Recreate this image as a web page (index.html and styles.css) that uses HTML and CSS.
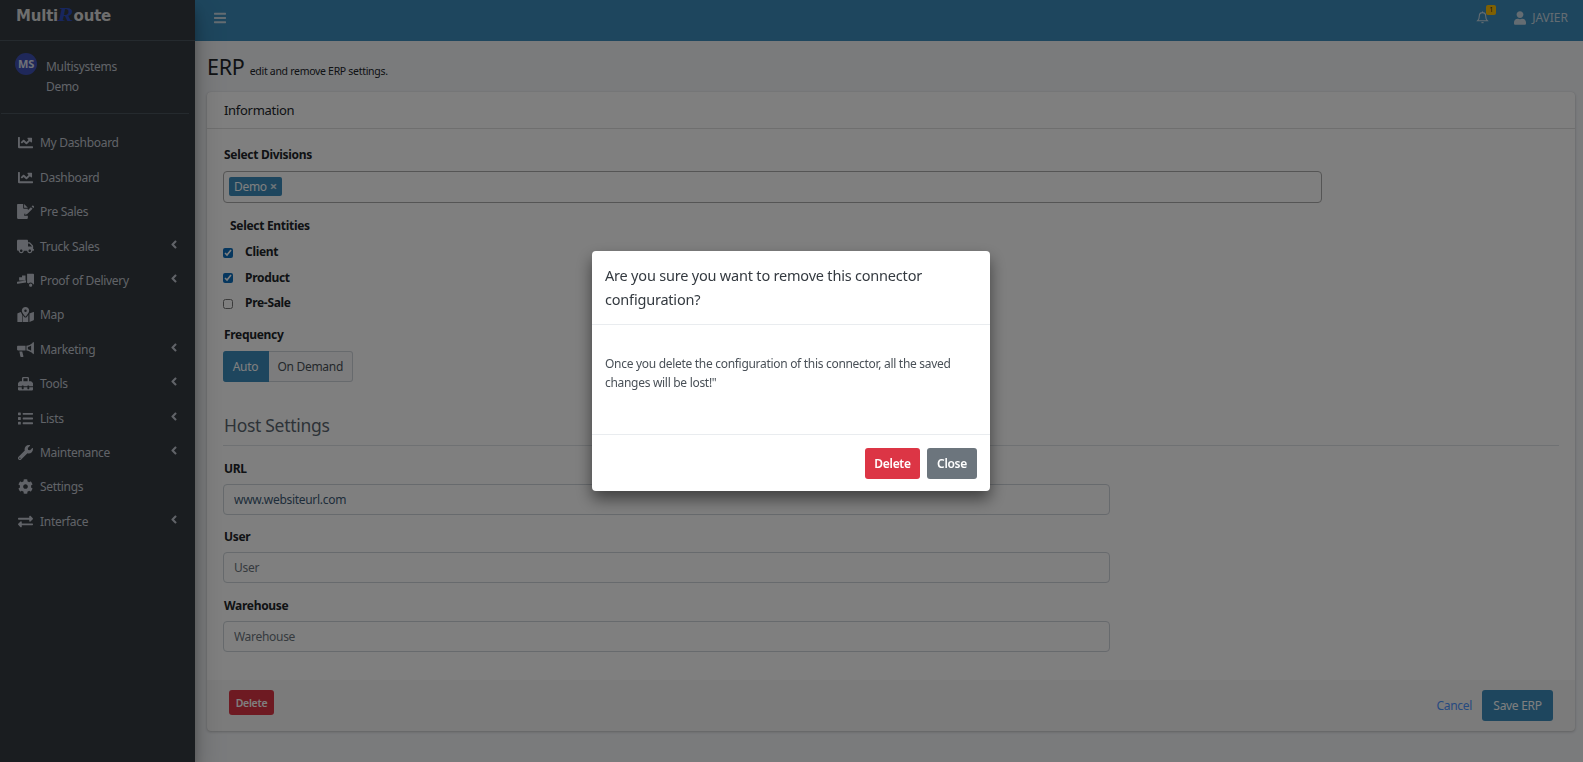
FILE: index.html
```html
<!DOCTYPE html>
<html>
    <head>
        <meta charset="utf-8">
        <title>ERP</title>
        <link rel="stylesheet" href="styles.css">
    </head>
    <body>
        <svg class="sprites" xmlns="http://www.w3.org/2000/svg">
            <symbol id="i-chart" viewBox="0 0 512 512"><path d="M496 384H64V80c0-8.84-7.16-16-16-16H16C7.16 64 0 71.16 0 80v336c0 17.67 14.33 32 32 32h464c8.84 0 16-7.16 16-16v-32c0-8.84-7.16-16-16-16zM464 96H345.94c-21.38 0-32.09 25.85-16.97 40.97l32.4 32.4L288 242.75l-73.37-73.37c-12.5-12.5-32.76-12.5-45.25 0l-68.69 68.69c-6.25 6.25-6.25 16.38 0 22.63l22.62 22.62c6.25 6.25 16.38 6.25 22.63 0L192 237.25l73.37 73.37c12.5 12.5 32.76 12.5 45.25 0l96-96 32.4 32.4c15.12 15.12 40.97 4.41 40.97-16.97V112c.01-8.84-7.15-16-15.99-16z"/></symbol>
            <symbol id="i-sign" viewBox="0 0 576 512"><path d="M0 32C0 14 14 0 32 0h176v136c0 13 11 24 24 24h136v60L250 338l-8 62h126v80c0 18-14 32-32 32H32c-18 0-32-14-32-32zM240 0l128 128H240zM70 420l50-90 40 50 40-30 20 60v20H70zM555 60l21 21c10 10 10 26 0 36l-22 22-57-57 22-22c10-10 26-10 36 0zM472 107l57 57-190 190-70 13 13-70z"/></symbol>
            <symbol id="i-truck" viewBox="0 0 640 512"><path d="M624 352h-16V243.9c0-12.7-5.1-24.9-14.1-33.9L494 110.1c-9-9-21.2-14.1-33.9-14.1H416V48c0-26.5-21.5-48-48-48H48C21.5 0 0 21.5 0 48v320c0 26.5 21.5 48 48 48h16c0 53 43 96 96 96s96-43 96-96h128c0 53 43 96 96 96s96-43 96-96h48c8.8 0 16-7.2 16-16v-32c0-8.8-7.2-16-16-16zM160 464c-26.5 0-48-21.5-48-48s21.5-48 48-48 48 21.5 48 48-21.5 48-48 48zm320 0c-26.5 0-48-21.5-48-48s21.5-48 48-48 48 21.5 48 48-21.5 48-48 48zm80-208H416V144h44.1l99.9 99.9V256z"/></symbol>
            <symbol id="i-loading" viewBox="0 0 640 512"><path d="M80 130h110v130H80zM190 70h130v190H190zM10 300l330-40v70L26 380c-14 2-24-6-26-20s-2-58 10-60zM380 0h230c16 0 30 14 30 30v370h-40c-8-40-44-70-86-70-30 0-58 15-74 40l-60-30zM514 372c33 0 60 27 60 60s-27 60-60 60-60-27-60-60 27-60 60-60z"/></symbol>
            <symbol id="i-map" viewBox="0 0 576 512"><path d="M288 0c-69 0-126 56-126 126 0 56 82 158 113 196 7 8 19 8 26 0 31-38 113-140 113-196C414 56 357 0 288 0zm0 168a42 42 0 1 1 0-84 42 42 0 0 1 0 84zM20 216l110-44c8 28 26 60 42 88v252L11 576V240c0-10 4-20 9-24zM288 360c-16 0-32-7-42-20-18-22-38-48-54-74v246l192 0V266c-16 26-36 52-54 74-10 13-26 20-42 20zM556 172l-132 52v288l141-64c7-3 11-10 11-18V186c0-11-11-18-20-14z"/></symbol>
            <symbol id="i-horn" viewBox="0 0 576 512"><path fill-rule="evenodd" d="M528 32c0-18 14-32 24-32s24 14 24 32v352c0 18-14 32-24 32s-24-14-24-32C470 330 390 298 320 288v-160c70-10 150-42 208-96zM480 120c-40 30-80 42-112 50v76c32 8 72 20 112 50zM32 128h256v160H32c-18 0-32-14-32-32v-96c0-18 14-32 32-32zM80 320h96l42 166c4 14-6 26-20 26h-64c-10 0-18-6-21-16z"/></symbol>
            <symbol id="i-toolbox" viewBox="0 0 512 512"><path d="M502 230l-45-45c-6-6-14-9-23-9h-58V80c0-26-22-48-48-48H184c-26 0-48 22-48 48v96H78c-9 0-17 3-23 9l-45 45c-6 6-10 14-10 23v99h128v-16c0-9 7-16 16-16h32c9 0 16 7 16 16v16h128v-16c0-9 7-16 16-16h32c9 0 16 7 16 16v16h128v-99c0-9-4-17-10-23zM328 176H184V80h144zM384 432c0 9-7 16-16 16h-32c-9 0-16-7-16-16v-48H192v48c0 9-7 16-16 16h-32c-9 0-16-7-16-16v-48H0v80c0 18 14 32 32 32h448c18 0 32-14 32-32v-80H384z"/></symbol>
            <symbol id="i-list" viewBox="0 0 512 512"><path d="M80 368H16a16 16 0 0 0-16 16v64a16 16 0 0 0 16 16h64a16 16 0 0 0 16-16v-64a16 16 0 0 0-16-16zm0-320H16A16 16 0 0 0 0 64v64a16 16 0 0 0 16 16h64a16 16 0 0 0 16-16V64a16 16 0 0 0-16-16zm0 160H16a16 16 0 0 0-16 16v64a16 16 0 0 0 16 16h64a16 16 0 0 0 16-16v-64a16 16 0 0 0-16-16zm416 176H176a16 16 0 0 0-16 16v32a16 16 0 0 0 16 16h320a16 16 0 0 0 16-16v-32a16 16 0 0 0-16-16zm0-320H176a16 16 0 0 0-16 16v32a16 16 0 0 0 16 16h320a16 16 0 0 0 16-16V80a16 16 0 0 0-16-16zm0 160H176a16 16 0 0 0-16 16v32a16 16 0 0 0 16 16h320a16 16 0 0 0 16-16v-32a16 16 0 0 0-16-16z"/></symbol>
            <symbol id="i-wrench" viewBox="0 0 512 512"><path d="M507.73 109.1c-2.24-9.03-13.54-12.09-20.12-5.51l-74.36 74.36-67.88-11.31-11.31-67.88 74.36-74.36c6.62-6.62 3.43-17.9-5.66-20.16-47.38-11.74-99.55.91-136.58 37.93-39.64 39.64-50.55 97.1-34.05 147.2L18.74 402.76c-24.99 24.99-24.99 65.51 0 90.5 24.99 24.99 65.51 24.99 90.5 0l213.21-213.21c50.12 16.71 107.47 5.68 147.37-34.22 37.07-37.07 49.7-89.32 37.91-136.73zM64 472c-13.25 0-24-10.75-24-24 0-13.26 10.75-24 24-24s24 10.74 24 24c0 13.25-10.75 24-24 24z"/></symbol>
            <symbol id="i-cog" viewBox="0 0 512 512"><path d="M487.4 315.7l-42.6-24.6c4.3-23.2 4.3-47 0-70.2l42.6-24.6c4.9-2.8 7.1-8.6 5.5-14-11.1-35.6-30-67.8-54.7-94.6-3.8-4.1-10-5.1-14.8-2.3L380.8 110c-17.9-15.4-38.5-27.3-60.8-35.1V25.8c0-5.6-3.9-10.5-9.4-11.7-36.7-8.2-74.3-7.8-109.2 0-5.5 1.2-9.4 6.1-9.4 11.7V75c-22.2 7.9-42.8 19.8-60.8 35.1L88.7 85.5c-4.9-2.8-11-1.9-14.8 2.3-24.7 26.7-43.6 58.9-54.7 94.6-1.7 5.4.6 11.2 5.5 14L67.3 221c-4.3 23.2-4.3 47 0 70.2l-42.6 24.6c-4.9 2.8-7.1 8.6-5.5 14 11.1 35.6 30 67.8 54.7 94.6 3.8 4.1 10 5.1 14.8 2.3l42.6-24.6c17.9 15.4 38.5 27.3 60.8 35.1v49.2c0 5.6 3.9 10.5 9.4 11.7 36.7 8.2 74.3 7.8 109.2 0 5.5-1.2 9.4-6.1 9.4-11.7v-49.2c22.2-7.9 42.8-19.8 60.8-35.1l42.6 24.6c4.9 2.8 11 1.9 14.8-2.3 24.7-26.7 43.6-58.9 54.7-94.6 1.5-5.5-.7-11.3-5.6-14.1zM256 336c-44.1 0-80-35.9-80-80s35.9-80 80-80 80 35.9 80 80-35.9 80-80 80z"/></symbol>
            <symbol id="i-exchange" viewBox="0 0 512 512"><path d="M0 168v-16c0-13.255 10.745-24 24-24h360V80c0-21.367 25.899-32.042 40.971-16.971l80 80c9.372 9.373 9.372 24.569 0 33.941l-80 80C409.956 271.982 384 261.456 384 240v-48H24c-13.255 0-24-10.745-24-24zm488 152H128v-48c0-21.314-25.862-32.08-40.971-16.971l-80 80c-9.372 9.373-9.372 24.569 0 33.941l80 80C102.057 463.997 128 453.437 128 432v-48h360c13.255 0 24-10.745 24-24v-16c0-13.255-10.745-24-24-24z"/></symbol>
            <symbol id="i-angle" viewBox="0 0 256 512"><path d="M31.7 239l136-136c9.4-9.4 24.6-9.4 33.9 0l22.6 22.6c9.4 9.4 9.4 24.6 0 33.9L127.9 256l96.4 96.4c9.4 9.4 9.4 24.6 0 33.9L201.7 409c-9.4 9.4-24.6 9.4-33.9 0l-136-136c-9.5-9.4-9.5-24.6-.1-34z"/></symbol>
        </svg>

        <div class="wrapper">
            <aside class="sidebar">
                <div class="brand">Multi<span class="brand-r">R</span>oute</div>
                <div class="user-panel">
                    <div class="avatar">MS</div>
                    <div class="user-name">Multisystems<br>Demo</div>
                </div>
                <nav class="nav">
                    <a class="nav-item" href="#"><svg class="nav-icon"><use href="#i-chart"/></svg><span>My Dashboard</span></a>
                    <a class="nav-item" href="#"><svg class="nav-icon"><use href="#i-chart"/></svg><span>Dashboard</span></a>
                    <a class="nav-item" href="#"><svg class="nav-icon"><use href="#i-sign"/></svg><span>Pre Sales</span></a>
                    <a class="nav-item" href="#"><svg class="nav-icon"><use href="#i-truck"/></svg><span>Truck Sales</span><svg class="nav-angle"><use href="#i-angle"/></svg></a>
                    <a class="nav-item" href="#"><svg class="nav-icon"><use href="#i-loading"/></svg><span>Proof of Delivery</span><svg class="nav-angle"><use href="#i-angle"/></svg></a>
                    <a class="nav-item" href="#"><svg class="nav-icon"><use href="#i-map"/></svg><span>Map</span></a>
                    <a class="nav-item" href="#"><svg class="nav-icon"><use href="#i-horn"/></svg><span>Marketing</span><svg class="nav-angle"><use href="#i-angle"/></svg></a>
                    <a class="nav-item" href="#"><svg class="nav-icon"><use href="#i-toolbox"/></svg><span>Tools</span><svg class="nav-angle"><use href="#i-angle"/></svg></a>
                    <a class="nav-item" href="#"><svg class="nav-icon"><use href="#i-list"/></svg><span>Lists</span><svg class="nav-angle"><use href="#i-angle"/></svg></a>
                    <a class="nav-item" href="#"><svg class="nav-icon"><use href="#i-wrench"/></svg><span>Maintenance</span><svg class="nav-angle"><use href="#i-angle"/></svg></a>
                    <a class="nav-item" href="#"><svg class="nav-icon"><use href="#i-cog"/></svg><span>Settings</span></a>
                    <a class="nav-item" href="#"><svg class="nav-icon"><use href="#i-exchange"/></svg><span>Interface</span><svg class="nav-angle"><use href="#i-angle"/></svg></a>
                </nav>
            </aside>

            <div class="main">
                <header class="topbar">
                    <svg class="burger" viewBox="0 0 448 512"><path d="M16 132h416c8.837 0 16-7.163 16-16V76c0-8.837-7.163-16-16-16H16C7.163 60 0 67.163 0 76v40c0 8.837 7.163 16 16 16zm0 160h416c8.837 0 16-7.163 16-16v-40c0-8.837-7.163-16-16-16H16c-8.837 0-16 7.163-16 16v40c0 8.837 7.163 16 16 16zm0 160h416c8.837 0 16-7.163 16-16v-40c0-8.837-7.163-16-16-16H16c-8.837 0-16 7.163-16 16v40c0 8.837 7.163 16 16 16z"/></svg>
                    <div class="top-right">
                        <div class="bell">
                            <svg class="bell-icon" viewBox="0 0 24 24"><path d="M12 1v2M12 3c-4 0-6 3-6 7 0 4-1 6-3 8h18c-2-2-3-4-3-8 0-4-2-7-6-7z"/><path d="M10 21.500h4"/></svg>
                            <span class="badge">1</span>
                        </div>
                        <svg class="user-icon" viewBox="0 0 448 512"><path d="M224 256c70.7 0 128-57.3 128-128S294.7 0 224 0 96 57.3 96 128s57.3 128 128 128zm89.6 32h-16.7c-22.2 10.2-46.9 16-72.9 16s-50.6-5.8-72.9-16h-16.7C60.2 288 0 348.2 0 422.4V464c0 26.5 21.5 48 48 48h352c26.5 0 48-21.5 48-48v-41.6c0-74.2-60.2-134.4-134.4-134.4z"/></svg>
                        <span class="user-label">JAVIER</span>
                    </div>
                </header>

                <div class="content">
                    <h1 class="page-title">ERP <small>edit and remove ERP settings.</small></h1>
                    <section class="card">
                        <div class="card-header">Information</div>
                        <div class="card-body">
                            <label class="label">Select Divisions</label>
                            <div class="multi-select">
                                <span class="chip">Demo <b>×</b></span>
                            </div>
                            <label class="label entities">Select Entities</label>
                            <div class="check-row"><input type="checkbox" checked><label>Client</label></div>
                            <div class="check-row"><input type="checkbox" checked><label>Product</label></div>
                            <div class="check-row"><input type="checkbox"><label>Pre-Sale</label></div>
                            <label class="label freq">Frequency</label>
                            <div class="btn-group">
                                <span class="seg seg-on">Auto</span>
                                <span class="seg">On Demand</span>
                            </div>
                            <h2 class="section-title">Host Settings</h2>
                            <label class="label">URL</label>
                            <input class="field" type="text" value="www.websiteurl.com">
                            <label class="label">User</label>
                            <input class="field" type="text" placeholder="User">
                            <label class="label">Warehouse</label>
                            <input class="field" type="text" placeholder="Warehouse">
                        </div>
                        <div class="card-footer">
                            <button class="btn btn-danger btn-sm">Delete</button>
                            <div class="footer-right">
                                <a class="link" href="#">Cancel</a>
                                <button class="btn btn-primary">Save ERP</button>
                            </div>
                        </div>
                    </section>
                </div>
            </div>
        </div>

        <div class="backdrop">
            <div class="modal">
                <div class="modal-header">Are you sure you want to remove this connector configuration?</div>
                <div class="modal-body">Once you delete the configuration of this connector, all the saved changes will be lost!"</div>
                <div class="modal-footer">
                    <button class="btn btn-danger">Delete</button>
                    <button class="btn btn-secondary">Close</button>
                </div>
            </div>
        </div>
    </body>
</html>
```

FILE: styles.css
```css
*{
    box-sizing: border-box;
}
html, body{
    height: 100%;
}
body{
    margin: 0;
    font-family: 'Noto Sans', sans-serif;
    font-size: 12px;
    letter-spacing: -.3px;
    color: #212529;
    background: #f4f6f9;
    overflow: hidden;
}
.sprites{
    display: none;
}
.wrapper{
    display: flex;
    height: 100%;
}

/* sidebar */
.sidebar{
    width: 195px;
    flex-shrink: 0;
    background: #343a40;
    color: #c2c7d0;
    box-shadow: 0 14px 28px rgba(0,0,0,.25), 0 10px 10px rgba(0,0,0,.22);
    z-index: 1;
}
.brand{
    height: 41px;
    padding: 4px 0 0 16px;
    font-family: 'DejaVu Sans', sans-serif;
    font-size: 15px;
    line-height: 24px;
    letter-spacing: -.2px;
    font-weight: bold;
    color: #dcdcdc;
    border-bottom: 1px solid #4b545c;
}
.brand-r{
    display: inline-block;
    margin: 0 2px 0 1px;
    font-family: 'Liberation Serif', serif;
    font-style: italic;
    font-size: 19px;
    line-height: 20px;
    color: #2f4dbd;
    transform: scaleX(1.25);
}
.user-panel{
    display: flex;
    height: 73px;
    margin: 0 6px 0 1px;
    padding: 12px 0 0 14px;
    border-bottom: 1px solid #4b545c;
}
.avatar{
    width: 22px;
    height: 22px;
    border-radius: 50%;
    background: #3f51b5;
    color: #dfe3ee;
    font-size: 11px;
    font-weight: 700;
    line-height: 21px;
    text-align: center;
}
.user-name{
    margin: 4px 0 0 9px;
    line-height: 20px;
}
.nav{
    padding-top: 11.800px;
}
.nav-item{
    display: flex;
    align-items: center;
    height: 34.4px;
    padding: 0 17px 0 17px;
    color: #c2c7d0;
    text-decoration: none;
}
.nav-icon{
    width: 17px;
    height: 15px;
    margin-right: 6px;
    fill: currentColor;
    flex-shrink: 0;
}
.nav-angle{
    width: 8px;
    height: 13px;
    margin: -4px 0 0 auto;
    fill: currentColor;
}

/* topbar */
.main{
    flex: 1;
    min-width: 0;
}
.topbar{
    display: flex;
    align-items: center;
    justify-content: space-between;
    height: 41px;
    padding: 0 15px 6px 19px;
    background: #3c8dbc;
}
.burger{
    width: 12px;
    height: 14px;
    fill: #c9d9e4;
}
.top-right{
    display: flex;
    align-items: center;
    color: #c9d9e4;
}
.bell{
    position: relative;
    width: 13px;
    height: 15px;
    margin-right: 25px;
}
.bell-icon{
    display: block;
    width: 13px;
    height: 15px;
    fill: none;
    stroke: #c9d9e4;
    stroke-width: 2;
}
.badge{
    position: absolute;
    top: -5px;
    left: 10px;
    width: 10px;
    height: 10px;
    border-radius: 2px;
    background: #ffc107;
    color: #212529;
    font-size: 7px;
    line-height: 10px;
    text-align: center;
}
.user-icon{
    width: 12px;
    height: 14px;
    margin-right: 6px;
    fill: #c9d9e4;
}
.user-label{
    font-size: 12px;
    letter-spacing: 0;
}

/* content */
.content{
    padding: 9px 8px 0 12px;
}
.page-title{
    margin: 0 0 8px;
    height: 34px;
    font-size: 21.5px;
    line-height: 34px;
    font-weight: 400;
}
.page-title small{
    font-size: 10.5px;
}
.card{
    background: #fff;
    border-radius: 4px;
    box-shadow: 0 0 1px rgba(0,0,0,.125), 0 1px 3px rgba(0,0,0,.2);
}
.card-header{
    height: 37px;
    padding: 0 17px;
    font-size: 13px;
    line-height: 36px;
    border-bottom: 1px solid rgba(0,0,0,.125);
}
.card-body{
    padding: 17px 16px 0;
    height: 551px;
}
.label{
    display: block;
    font-weight: 700;
    line-height: 18px;
    padding-left: 1px;
}
.multi-select{
    width: 1099px;
    height: 32px;
    margin-top: 7px;
    padding: 5px;
    border: 1px solid #aaa;
    border-radius: 4px;
}
.chip{
    display: inline-block;
    height: 19px;
    padding: 0 5px;
    background: #3c8dbc;
    color: #fff;
    border-radius: 2px;
    line-height: 19px;
}
.chip b{
    font-size: 13px;
    line-height: 13px;
    opacity: .8;
}
.entities{
    margin: 14px 0 4px 6px;
}
.check-row{
    display: flex;
    align-items: center;
    height: 25.5px;
    font-weight: 700;
}
.check-row input{
    width: 10px;
    height: 10px;
    margin: 2px 12px 0 0;
    accent-color: #0d6ebd;
}
.freq{
    margin-top: 10px;
}
.btn-group{
    display: inline-flex;
    height: 31px;
    margin-top: 7px;
}
.seg{
    padding: 0 8.5px;
    line-height: 29px;
    color: #495057;
    background: #f8f9fa;
    border: 1px solid #ced4da;
    border-left: 0;
    border-radius: 0 3px 3px 0;
}
.seg-on{
    width: 46px;
    padding: 0;
    text-align: center;
    background: #3c8dbc;
    border-color: #3c8dbc;
    color: #fff;
    border-radius: 3px 0 0 3px;
}
.section-title{
    margin: 31px 0 14px;
    padding: 0 1px 8px;
    font-size: 17.5px;
    line-height: 24px;
    font-weight: 400;
    color: #5b6670;
    border-bottom: 1px solid #dee2e6;
}
.field{
    display: block;
    width: 887px;
    height: 31px;
    margin: 6px 0 13.600px;
    padding: 0 10px;
    font: inherit;
    letter-spacing: inherit;
    color: #3d5a75;
    border: 1px solid #ced4da;
    border-radius: 4px;
    background: #fff;
}
.field::placeholder{
    color: #6c757d;
}
.card-footer{
    display: flex;
    justify-content: space-between;
    height: 51px;
    padding: 10px 22px 0 22px;
    background: rgba(0,0,0,.03);
    border-radius: 0 0 4px 4px;
}
.footer-right{
    display: flex;
    align-items: flex-start;
}
.link{
    margin: 7px 10px 0 0;
    color: #4d94ff;
    text-decoration: none;
}
.btn{
    height: 31px;
    padding: 0 10px;
    font: inherit;
    letter-spacing: inherit;
    color: #fff;
    border: 0;
    border-radius: 3px;
}
.btn-sm{
    width: 45px;
    height: 25px;
    padding: 0;
    font-size: 10.5px;
}
.btn-primary{
    width: 71px;
    background: #3c8dbc;
}
.btn-danger{
    background: #dc3545;
    font-weight: 600;
}
.btn-secondary{
    width: 50px;
    padding: 0;
    background: #6c757d;
    font-weight: 600;
}
.modal-footer .btn-danger{
    width: 55px;
    padding: 0;
}

/* modal */
.backdrop{
    position: fixed;
    inset: 0;
    z-index: 10;
    padding: 251px 0 0 592px;
    background: rgba(0,0,0,.5);
}
.modal{
    width: 398px;
    height: 240px;
    background: #fff;
    border-radius: 4px;
    box-shadow: 0 8px 16px rgba(0,0,0,.5);
}
.modal-header{
    height: 74px;
    padding: 12px 13px 0;
    font-size: 14.5px;
    line-height: 24px;
    letter-spacing: -.2px;
    color: #343a40;
    border-bottom: 1px solid #e9ecef;
}
.modal-body{
    height: 109px;
    padding: 29px 13px 0;
    line-height: 19px;
    letter-spacing: -.3px;
    color: #495057;
}
.modal-footer{
    display: flex;
    justify-content: flex-end;
    gap: 7px;
    padding: 13px 13px 0;
    border-top: 1px solid #e9ecef;
}
```
